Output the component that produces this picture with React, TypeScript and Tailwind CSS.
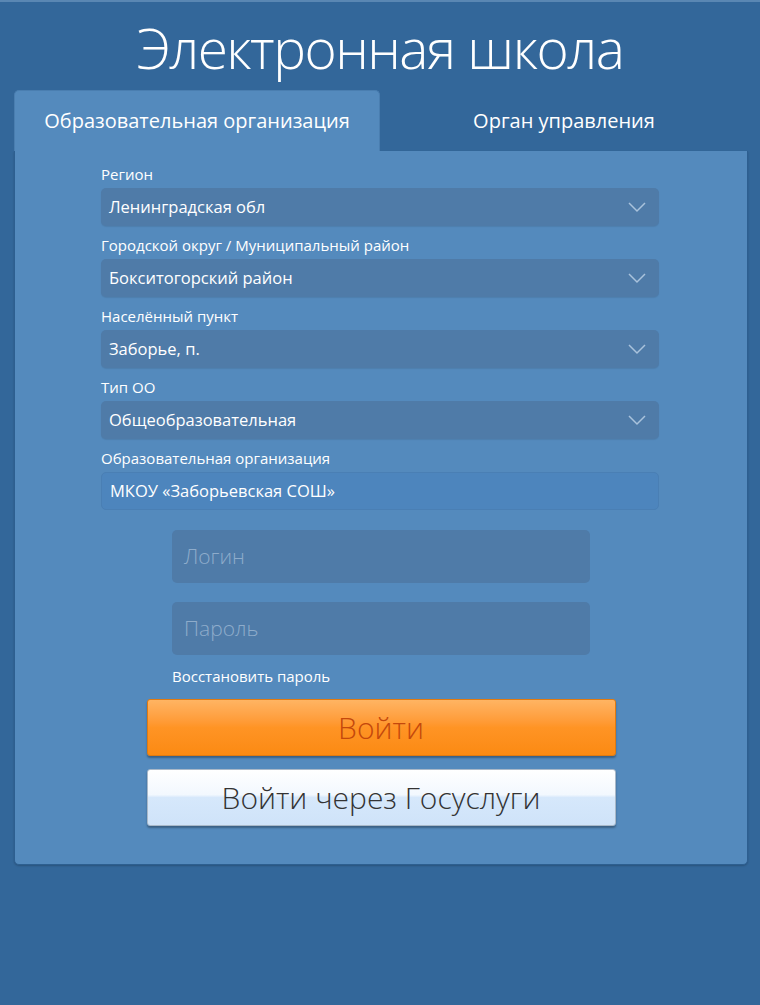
const Chevron = () => (
  <svg width="20" height="12" viewBox="0 0 20 12" fill="none">
    <path d="M2 2 L10 10 L18 2" stroke="#a9c2dc" strokeWidth="1.5" />
  </svg>
);

const SelectField = ({ label, value }: { label: string; value: string }) => (
  <div className="flex flex-col">
    <label className="text-[15px] leading-5 text-white mb-1">{label}</label>
    <div className="h-[38px] rounded-[5px] bg-[#4f7ba8] flex items-center justify-between pl-2 pr-3 text-[16.5px] text-white shadow-[0_1px_1px_rgba(0,0,0,0.08)]">
      <span>{value}</span>
      <Chevron />
    </div>
  </div>
);

const App = () => {
  return (
    <div
      className="min-h-[1005px] w-[760px] bg-[#33679a] border-t-2 border-[#5a87b3]"
      style={{ fontFamily: '"Open Sans", "Noto Sans", sans-serif' }}
    >
      <h1 className="text-center text-white font-light text-[55px] leading-[64px] pt-[14px] tracking-[-1.5px]">
        Электронная школа
      </h1>

      <div className="mr-[12px] ml-[14px] mt-[10px]">
        <div className="flex h-[61px]">
          <div className="w-[366px] bg-[#548abd] rounded-t-[5px] border border-b-0 border-[#4a7eb0] flex items-center justify-center text-white text-[20px]">
            Образовательная организация
          </div>
          <div className="flex-1 flex items-center justify-center text-white text-[20px] font-medium">
            Орган управления
          </div>
        </div>

        <div className="bg-[#548abd] rounded-b-[5px] border border-t-0 border-[#2d5f90] shadow-[0_1px_2px_rgba(0,0,0,0.2)] pt-[13px] pb-[38px]">
          <div className="w-[558px] ml-[86px] flex flex-col gap-[9px]">
            <SelectField label="Регион" value="Ленинградская обл" />
            <SelectField label="Городской округ / Муниципальный район" value="Бокситогорский район" />
            <SelectField label="Населённый пункт" value="Заборье, п." />
            <SelectField label="Тип ОО" value="Общеобразовательная" />
            <div className="flex flex-col">
              <label className="text-[15px] leading-5 text-white mb-1">Образовательная организация</label>
              <div className="h-[38px] rounded-[5px] bg-[#4d85bd] flex items-center px-2 text-[16.5px] text-white border border-[#4a7fb4]">
                МКОУ «Заборьевская СОШ»
              </div>
            </div>
          </div>

          <div className="w-[418px] mx-auto mt-[20px] flex flex-col">
            <div className="h-[53px] rounded-[5px] bg-[#4f7ba8] flex items-center px-3 text-[21px] font-light text-[#8eaccb]">
              Логин
            </div>
            <div className="h-[53px] rounded-[5px] bg-[#4f7ba8] flex items-center px-3 text-[21px] font-light text-[#8eaccb] mt-[19px]">
              Пароль
            </div>
            <div className="text-[15px] leading-5 text-white mt-[11px]">Восстановить пароль</div>
          </div>

          <div className="w-[469px] mx-auto mt-[13px] flex flex-col gap-[13px]">
            <button className="h-[57px] rounded-[3px] bg-gradient-to-b from-[#ffb462] via-[#ff9424] to-[#fb8a12] border border-[#e07a10] shadow-[0_2px_2px_rgba(0,0,0,0.3)] text-[30px] font-light text-[#c4480c]">
              Войти
            </button>
            <button className="h-[57px] rounded-[3px] border border-[#a9b8c8] shadow-[0_2px_2px_rgba(0,0,0,0.3)] text-[30px] font-light text-[#333] bg-[linear-gradient(to_bottom,#ffffff_0%,#f2f8fe_45%,#d6e8fb_50%,#cfe3f9_100%)]">
              Войти через Госуслуги
            </button>
          </div>
        </div>
      </div>
    </div>
  );
};

export default App;
